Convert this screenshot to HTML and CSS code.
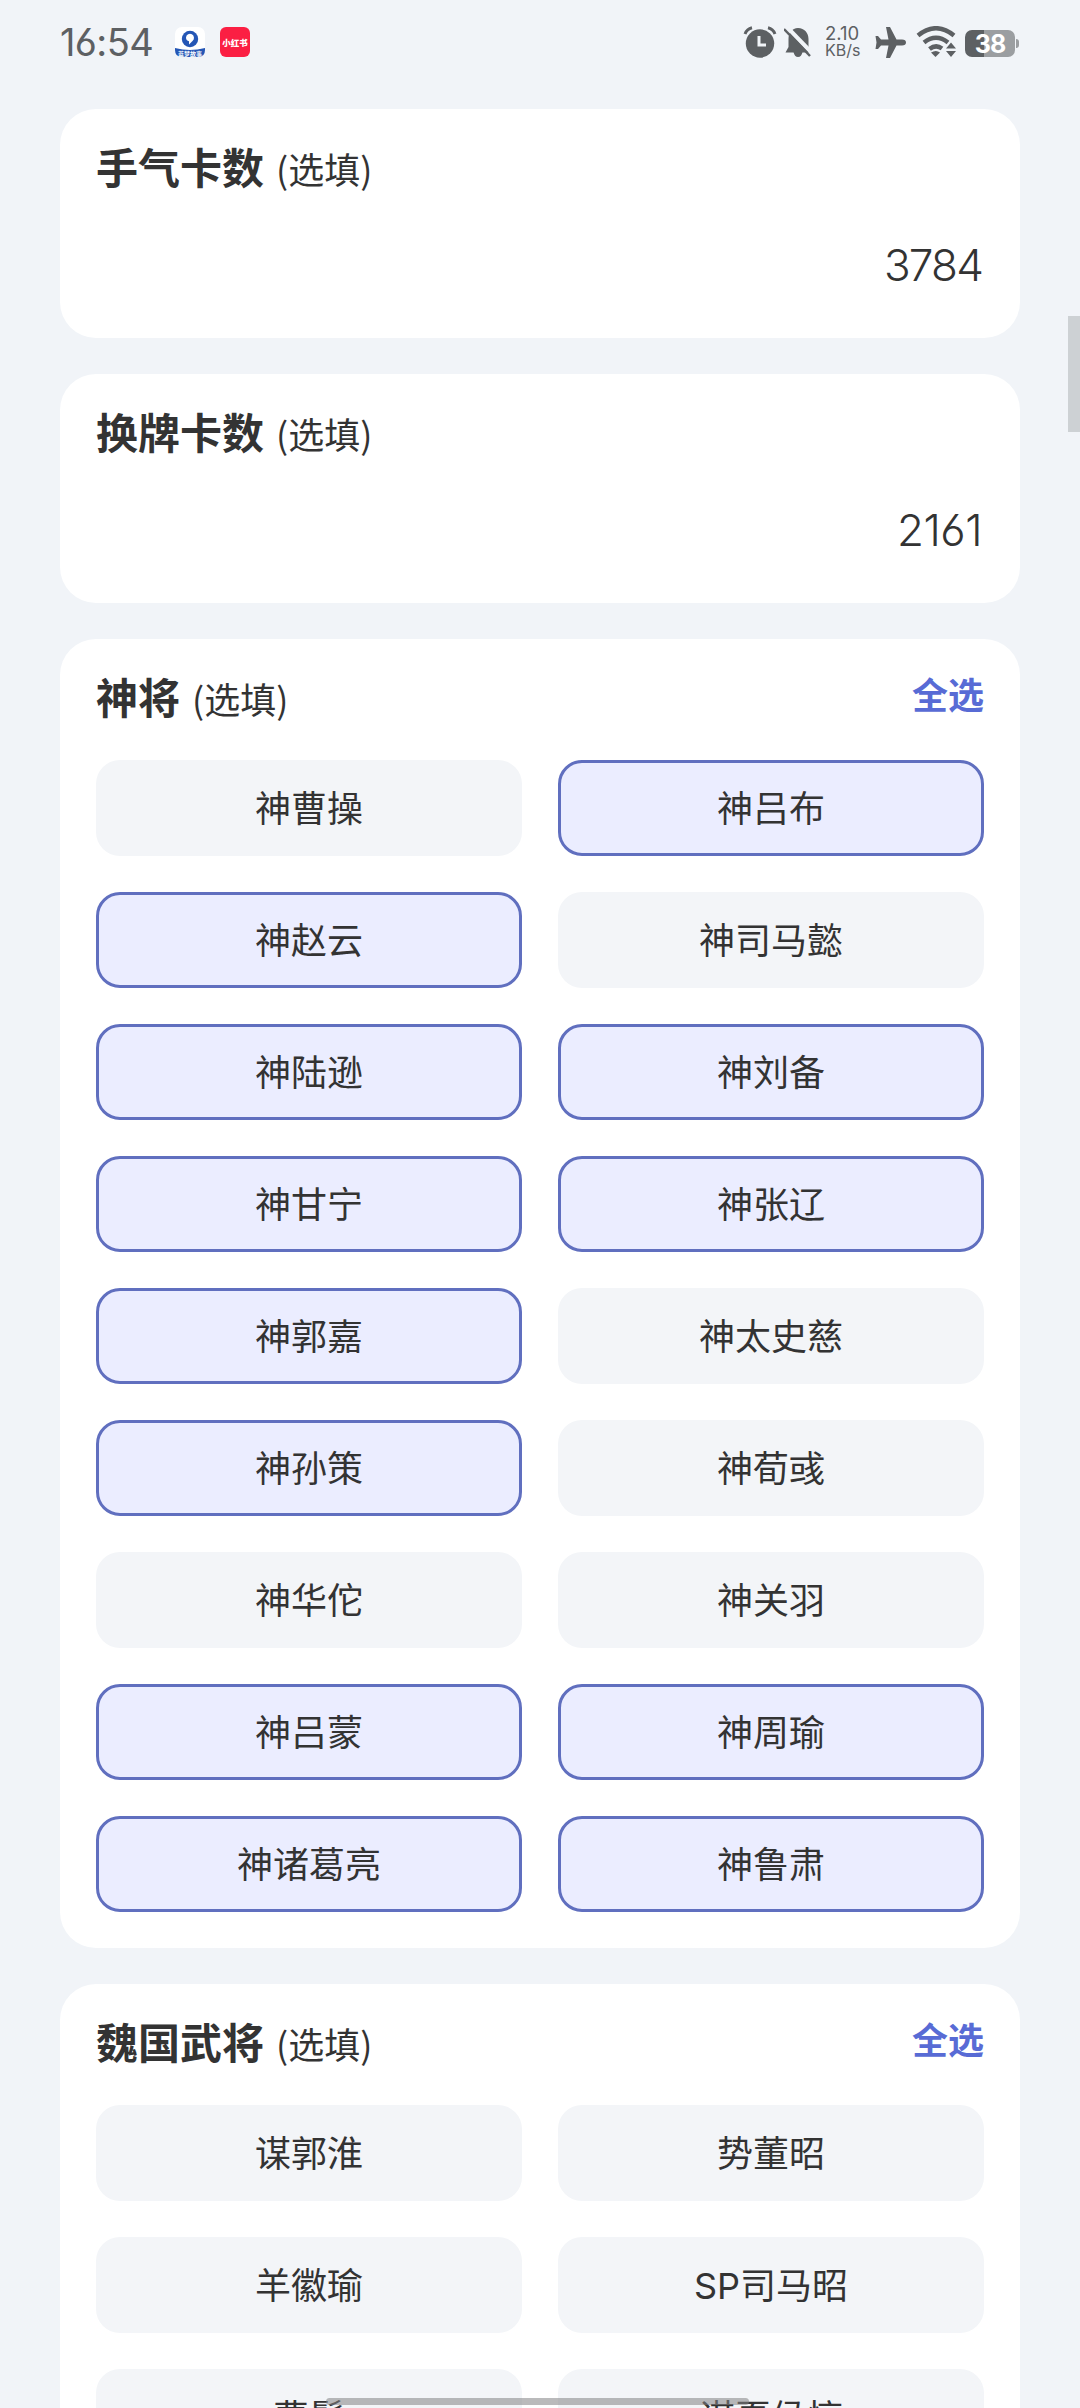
FILE: index.html
```html
<!DOCTYPE html>
<html lang="zh-CN">
<head>
<meta charset="utf-8">
<title>武将选择</title>
<link rel="stylesheet" href="styles.css">
</head>
<body>
<div class="screen">
<header class="status">
  <span class="time">16:54</span>
  <svg class="app-icon app-pledge" viewBox="0 0 30 30"><rect width="30" height="30" rx="7" fill="#fff"/><circle cx="15" cy="12" r="8.2" fill="#2456b5"/><path d="M11 10.500a4 4 0 1 1 6.500 3.500L14 17.500v-3.200a4 4 0 0 1-3-3.800z" fill="#fff"/><path d="M0 21q15 4 30 0v2q0 7-7 7H7q-7 0-7-7z" fill="#2456b5"/><text x="15" y="28.500" text-anchor="middle" class="pledge-text">蓝梦故事</text></svg>
  <svg class="app-icon" viewBox="0 0 30 30"><rect width="30" height="30" rx="6" fill="#fb1f43"/><text x="15" y="18.500" text-anchor="middle" class="red-text">小红书</text></svg>
  <div class="indicators">
    <svg class="alarm" width="34" height="32" viewBox="0 0 34 32"><circle cx="17" cy="17.500" r="14.200"/><path d="M2 8Q4 3 9 1.800M25 1.800Q30 3 32 8" class="line" stroke-width="3"/><path d="M16 10v9h7" class="cut" stroke-width="3"/></svg>
    <svg class="bell" width="28" height="31" viewBox="0 0 28 31"><path d="M14 1C20.500 1 24.500 6 24.500 12v8l3 5.500H1.500l3-5.500v-8C4.500 6 8 1 14 1z"/><path d="M9.500 25h9q-1 5-4.500 5t-4.500-5z"/><path d="M3 0l26 27" class="cut" stroke-width="4"/><path d="M0 2l26 27" class="line" stroke-width="2.400"/></svg>
    <div class="speed"><span class="rate">2.10</span><span>KB/s</span></div>
    <svg class="plane" width="31" height="31" viewBox="0 0 31 31"><path d="M11 0h4l6.500 12.500H27q4 0 4 3t-4 3h-5.500L15 31h-4l2.500-12.500H6L3 22H.5l1-6.500-1-6.500H3l3 3.500h7.500z"/></svg>
    <svg class="wifi" width="41" height="32" viewBox="0 0 41 32"><path d="M2 9.500Q20 -5 38 9.500M8 16.500Q20 7 32 16.500M13.500 23Q20 18 26 22.500" class="line" stroke-width="4.500"/><path d="M15 26.500q5-3 9 0L19.500 31z"/><path d="M30 22.500l5-6 5 6zM30 25h10l-5 6z"/></svg>
    <div class="battery"><span>38</span></div>
  </div>
</header>
<main class="cards">
  <section class="card field">
    <h2>手气卡数<small>(选填)</small></h2>
    <div class="value">3784</div>
  </section>
  <section class="card field">
    <h2>换牌卡数<small>(选填)</small></h2>
    <div class="value loose">2161</div>
  </section>
  <section class="card">
    <div class="head"><h2>神将<small>(选填)</small></h2><a class="all">全选</a></div>
    <div class="grid">
      <div class="chip">神曹操</div><div class="chip on">神吕布</div>
      <div class="chip on">神赵云</div><div class="chip">神司马懿</div>
      <div class="chip on">神陆逊</div><div class="chip on">神刘备</div>
      <div class="chip on">神甘宁</div><div class="chip on">神张辽</div>
      <div class="chip on">神郭嘉</div><div class="chip">神太史慈</div>
      <div class="chip on">神孙策</div><div class="chip">神荀彧</div>
      <div class="chip">神华佗</div><div class="chip">神关羽</div>
      <div class="chip on">神吕蒙</div><div class="chip on">神周瑜</div>
      <div class="chip on">神诸葛亮</div><div class="chip on">神鲁肃</div>
    </div>
  </section>
  <section class="card">
    <div class="head"><h2>魏国武将<small>(选填)</small></h2><a class="all">全选</a></div>
    <div class="grid">
      <div class="chip">谋郭淮</div><div class="chip">势董昭</div>
      <div class="chip">羊徽瑜</div><div class="chip"><span class="latin">SP</span>司马昭</div>
      <div class="chip">曹髦</div><div class="chip">谋夏侯惇</div>
    </div>
  </section>
</main>
<div class="scrollbar"></div>
<div class="home-bar"></div>
</div>
</body>
</html>
```

FILE: styles.css
```css
* { box-sizing: border-box; }
body { margin: 0; background: #f1f4f8; }
.screen {
  position: relative;
  width: 1080px;
  height: 2408px;
  overflow: hidden;
  background: #f1f4f8;
  color: #333;
  font-family: "Noto Sans CJK SC", sans-serif;
}
.status {
  display: flex;
  align-items: center;
  height: 109px;
  padding: 0 61px 25px 60px;
  color: #5d6063;
  font-family: Inter, sans-serif;
}
.time { width: 115px; font-size: 38px; letter-spacing: -0.6px; font-feature-settings: "cv03"; }
.app-icon { width: 30px; height: 30px; margin-right: 15px; }
.pledge-text { font: 700 6px "Noto Sans CJK SC", sans-serif; fill: #fff; }
.red-text { font: 900 8.5px "Noto Sans CJK SC", sans-serif; fill: #fff; }
.indicators { display: flex; align-items: center; margin-left: auto; }
.indicators svg { fill: #5d6063; }
.indicators .line { fill: none; stroke: #5d6063; }
.indicators .cut { fill: none; stroke: #f1f4f8; }
.bell { margin-left: 7px; }
.speed { display: flex; flex-direction: column; width: 38px; margin-left: 13px; font-size: 16px; line-height: 17px; }
.rate { font-size: 18.5px; }
.plane { margin-left: 12px; }
.wifi { margin-left: 10px; }
.battery {
  position: relative;
  width: 50px;
  height: 27px;
  margin: 2px 4px 0 8px;
  border-radius: 7px;
  background: linear-gradient(90deg, #5d6063 38%, #9b9ea1 38%);
  color: #fff;
  font-size: 25px;
  font-weight: 700;
  line-height: 28px;
  letter-spacing: -1px;
  text-align: center;
}
.battery::after {
  content: "";
  position: absolute;
  left: 51px;
  top: 9px;
  width: 3px;
  height: 9px;
  border-radius: 0 3px 3px 0;
  background: #9b9ea1;
}
.cards { display: flex; flex-direction: column; gap: 36px; padding: 0 60px; }
.card { padding: 33px 36px 36px; border-radius: 36px; background: #fff; }
.field { height: 229px; }
h2 { margin: 0; height: 48px; font-size: 42px; font-weight: 700; line-height: 48px; white-space: nowrap; }
small { margin-left: 12px; font-size: 36px; font-weight: 400; }
.value {
  margin-top: 51px;
  padding-right: 2px;
  font: 350 44px/48px Inter, sans-serif;
  letter-spacing: -1.8px;
  font-feature-settings: "cv03";
  text-align: right;
}
.value.loose { letter-spacing: -0.5px; }
.head { display: flex; justify-content: space-between; height: 88px; }
.all { color: #586bd5; font-size: 36px; font-weight: 700; line-height: 42px; }
.grid { display: grid; grid-template-columns: 1fr 1fr; gap: 36px; }
.chip {
  height: 96px;
  border-radius: 24px;
  background: #f3f5f8;
  font-size: 36px;
  line-height: 92px;
  text-align: center;
}
.chip.on { border: 3px solid #606fbf; background: #ebedff; line-height: 86px; }
.latin { font-family: Inter, sans-serif; font-weight: 400; }
.scrollbar { position: absolute; right: 0; top: 316px; width: 12px; height: 116px; background: #cdd1d4; }
.home-bar { position: absolute; left: 326px; top: 2398px; width: 423px; height: 7px; border-radius: 4px; background: rgba(130, 130, 132, 0.55); }
```
